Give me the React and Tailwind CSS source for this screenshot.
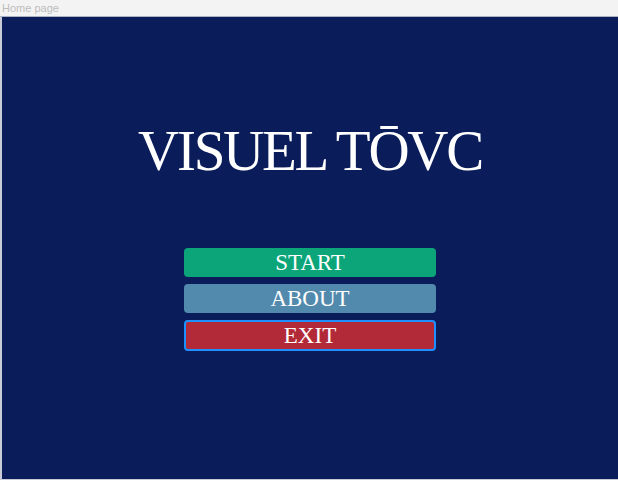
export default function App() {
  return (
    <div className="w-[618px] h-[480px] flex flex-col bg-[#f3f3f3] overflow-hidden">
      <div className="h-[16px] flex items-center px-[2px] text-[11px] leading-none text-[#bdbdbd] font-['Liberation_Sans',sans-serif]">
        Home page
      </div>
      <div className="h-[1px] bg-[#a9b1c3]" />
      <div className="flex-1 flex flex-col items-center bg-[#0b1c5a] border-l-2 border-[#c9ccd6] font-['Liberation_Serif',serif]">
        <h1 className="mt-[105px] text-[57px] leading-none text-white tracking-[-0.04em]">VISUEL TŌVC</h1>
        <div className="mt-[69px] w-[252px] flex flex-col gap-[7px]">
          <button className="h-[29px] rounded-[4px] bg-[#0ca57a] text-white text-[23px] leading-none">START</button>
          <button className="h-[29px] rounded-[4px] bg-[#528aae] text-white text-[23px] leading-none">ABOUT</button>
          <button className="h-[31px] rounded-[4px] bg-[#b22a38] border-2 border-[#1e8fff] text-white text-[23px] leading-none">EXIT</button>
        </div>
      </div>
      <div className="h-[1px] bg-[#c9ccd6]" />
    </div>
  );
}
